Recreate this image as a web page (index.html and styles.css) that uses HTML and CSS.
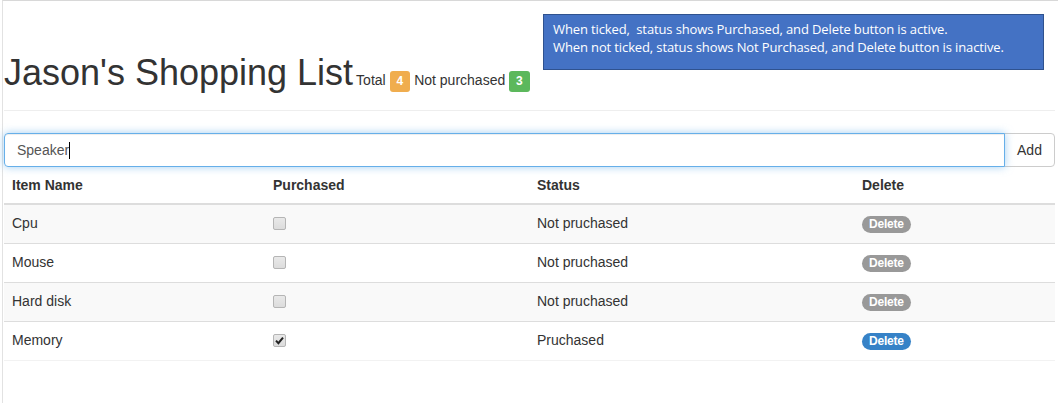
FILE: index.html
```html
<!DOCTYPE html>
<html lang="en">
<head>
<meta charset="utf-8">
<title>Jason's Shopping List</title>
<link rel="stylesheet" href="styles.css">
</head>
<body>
<div class="frame">
  <div class="note">When ticked,&nbsp; status shows Purchased, and Delete button is active.<br>When not ticked, status shows Not Purchased, and Delete button is inactive.</div>
  <div class="page-header">
    <h1 class="title">Jason's Shopping List<small class="counts">Total <span class="label label-warning">4</span> Not purchased <span class="label label-success">3</span></small></h1>
  </div>
  <div class="input-group">
    <div class="form-control"><span class="val">Speaker</span><span class="caret"></span></div>
    <button class="btn-add" type="button">Add</button>
  </div>
  <table class="table">
    <colgroup><col class="c1"><col class="c2"><col class="c3"><col class="c4"></colgroup>
    <thead>
      <tr><th>Item Name</th><th>Purchased</th><th>Status</th><th>Delete</th></tr>
    </thead>
    <tbody>
      <tr class="odd"><td>Cpu</td><td><span class="cb"></span></td><td>Not pruchased</td><td><span class="del">Delete</span></td></tr>
      <tr><td>Mouse</td><td><span class="cb"></span></td><td>Not pruchased</td><td><span class="del">Delete</span></td></tr>
      <tr class="odd"><td>Hard disk</td><td><span class="cb"></span></td><td>Not pruchased</td><td><span class="del">Delete</span></td></tr>
      <tr class="last"><td>Memory</td><td><span class="cb checked"><svg viewBox="0 0 13 13" width="13" height="13"><path d="M3 6.6 L5.4 9.2 L10 3.6" fill="none" stroke="#222" stroke-width="2"/></svg></span></td><td>Pruchased</td><td><span class="del active">Delete</span></td></tr>
    </tbody>
  </table>
</div>
</body>
</html>
```
FILE: styles.css
```css
* { box-sizing: border-box; }
html, body { margin: 0; padding: 0; background: #fff; }
body {
  font-family: "Liberation Sans", Arial, Helvetica, sans-serif;
  font-size: 14px;
  line-height: 20px;
  color: #333;
  width: 1058px;
  height: 403px;
  overflow: hidden;
}
.frame {
  position: relative;
  margin-left: 2px;
  width: 1056px;
  height: 403px;
  border-top: 1px solid #d8d8d8;
  border-left: 1px solid #e2e2e2;
  padding-left: 1px;
}
.note {
  position: absolute;
  left: 540px;
  top: 13px;
  width: 501px;
  height: 56px;
  background: #4472c4;
  border: 1px solid #2f528f;
  color: #fff;
  font-family: "Open Sans", "Liberation Sans", sans-serif;
  font-size: 13px;
  line-height: 18px;
  padding: 5px 9px;
  letter-spacing: -0.12px;
}
.page-header {
  width: 1051px;
  padding: 52px 0 17px;
  border-bottom: 1px solid #eee;
}
.title {
  margin: 0;
  font-size: 36px;
  line-height: 40px;
  font-weight: 500;
  color: #333;
}
.counts {
  font-size: 14px;
  line-height: 14px;
  color: #333;
  margin-left: 3px;
}
.label {
  display: inline;
  font-size: 12px;
  font-weight: bold;
  line-height: 12px;
  color: #fff;
  padding: 3px 7px 4px;
  border-radius: 3px;
}
.label-warning { background: #f0ad4e; }
.label-success { background: #5cb85c; }
.input-group {
  display: flex;
  width: 1051px;
  margin-top: 22px;
  height: 34px;
}
.form-control {
  flex: 1;
  height: 34px;
  border: 1px solid #66afe9;
  border-radius: 4px 0 0 4px;
  box-shadow: inset 0 1px 1px rgba(0,0,0,.075), 0 0 8px rgba(102,175,233,.6);
  padding: 6px 12px;
  font-size: 14px;
  line-height: 20px;
  color: #555;
  position: relative;
  z-index: 2;
  display: flex;
  align-items: center;
}
.caret {
  display: inline-block;
  width: 1px;
  height: 17px;
  background: #000;
}
.btn-add {
  width: 51px;
  height: 34px;
  margin-left: -1px;
  border: 1px solid #ccc;
  border-radius: 0 4px 4px 0;
  background: #fff;
  color: #333;
  font-family: inherit;
  font-size: 14px;
  padding: 0 12px;
}
.table {
  width: 1051px;
  border-collapse: collapse;
  border-spacing: 0;
  table-layout: fixed;
}
.c1 { width: 261px; }
.c2 { width: 264px; }
.c3 { width: 325px; }
.c4 { width: 201px; }
.table th {
  text-align: left;
  font-weight: bold;
  padding: 8px;
  line-height: 20px;
  border-bottom: 2px solid #ddd;
}
.table td {
  padding: 8px 8px 10px;
  line-height: 20px;
  border-top: 1px solid #ddd;
  vertical-align: top;
}
.table tr.odd td { background: #f9f9f9; }
.table tr.last td { border-bottom: 1px solid #f2f2f2; }
.cb {
  display: inline-block;
  width: 13px;
  height: 13px;
  margin-top: 4px;
  border: 1px solid #b5b5b5;
  border-radius: 2px;
  background: linear-gradient(#e9e9e9, #dcdcdc);
  vertical-align: top;
  position: relative;
}
.cb svg {
  position: absolute;
  left: -1px;
  top: -1px;
}
.del {
  display: inline-block;
  margin-top: 2px;
  font-size: 12px;
  font-weight: bold;
  line-height: 13px;
  color: #fff;
  background: #999;
  padding: 2px 7px 2px;
  border-radius: 9px;
  letter-spacing: -0.2px;
}
.del.active { background: #3682c7; }
```
